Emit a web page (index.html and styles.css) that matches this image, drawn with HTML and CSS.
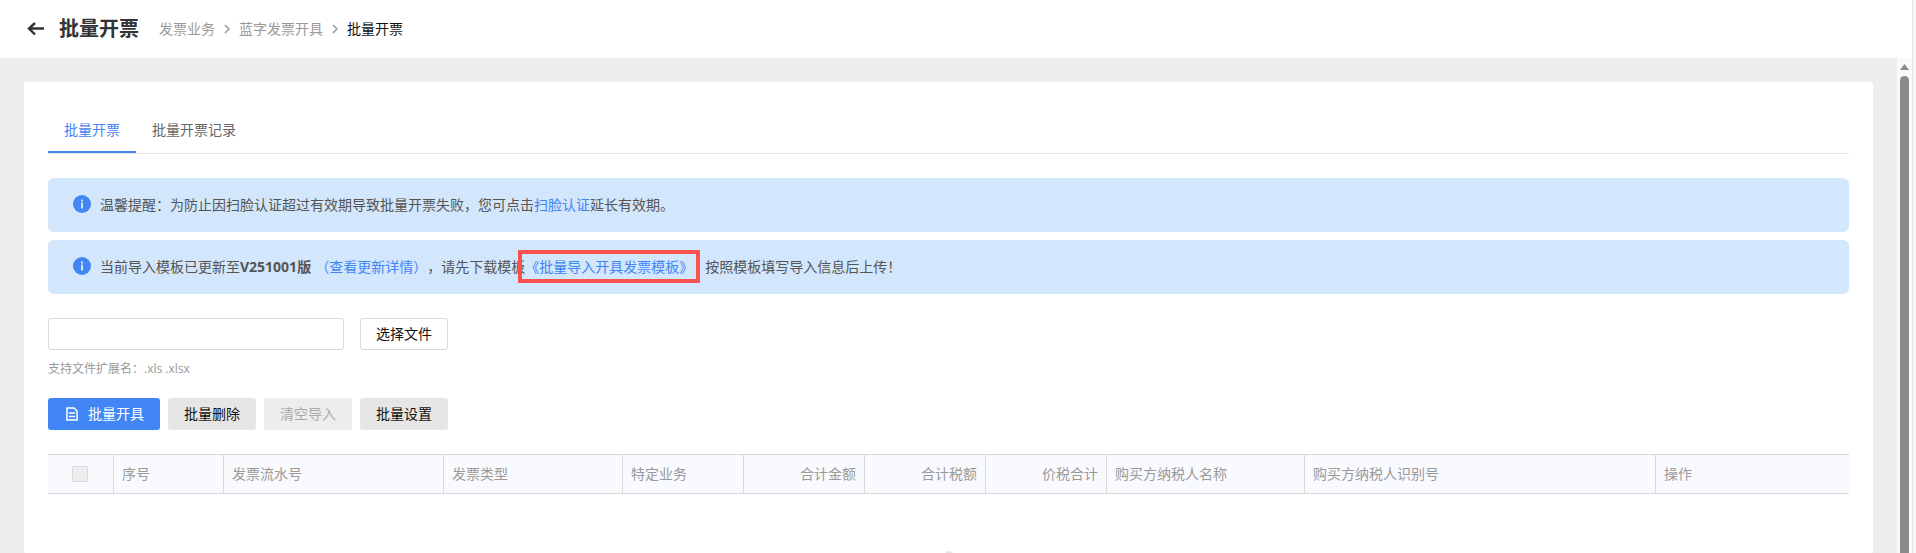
FILE: index.html
```html
<!DOCTYPE html>
<html lang="zh-CN">
<head>
<meta charset="utf-8">
<title>批量开票</title>
<link rel="stylesheet" href="styles.css">
</head>
<body>
<div class="app">
  <header class="header">
    <button class="back" type="button" aria-label="返回">
      <svg width="18" height="14" viewBox="0 0 18 14" fill="none" stroke="#333" stroke-width="2.400"><path d="M17 6.500H2M8 1L2 6.500l6 6"/></svg>
    </button>
    <h1 class="title">批量开票</h1>
    <nav class="crumbs" aria-label="面包屑">
      <a href="#">发票业务</a>
      <svg class="chevron" width="6" height="10" viewBox="0 0 6 10"><path d="M1 1l4 4-4 4"/></svg>
      <a href="#">蓝字发票开具</a>
      <svg class="chevron" width="6" height="10" viewBox="0 0 6 10"><path d="M1 1l4 4-4 4"/></svg>
      <span class="current">批量开票</span>
    </nav>
  </header>
  <div class="body">
    <main class="content">
      <section class="panel">
        <div class="tabs" role="tablist">
          <button class="tab tab-active" type="button" role="tab" aria-selected="true">批量开票</button>
          <button class="tab" type="button" role="tab" aria-selected="false">批量开票记录</button>
        </div>
        <div class="alerts">
          <div class="alert">
            <svg class="info" width="18" height="20" viewBox="0 0 18 20"><circle cx="9" cy="9" r="9" fill="#4285f4"/><path d="M8 4.500h2v2H8zM8 7.500h2v6H8z" fill="#d2e6fc"/></svg>
            <p class="alert-text">温馨提醒：为防止因扫脸认证超过有效期导致批量开票失败，您可点击<a href="#">扫脸认证</a>延长有效期。</p>
          </div>
          <div class="alert">
            <svg class="info" width="18" height="20" viewBox="0 0 18 20"><circle cx="9" cy="9" r="9" fill="#4285f4"/><path d="M8 4.500h2v2H8zM8 7.500h2v6H8z" fill="#d2e6fc"/></svg>
            <p class="alert-text">当前导入模板已更新至<b class="version">V251001版</b><a href="#">（查看更新详情）</a>，请先下载模板<a class="template" href="#">《批量导入开具发票模板》</a><span class="after">按照模板填写导入信息后上传！</span></p>
          </div>
        </div>
        <div class="upload">
          <input class="file-name" type="text" aria-label="文件名">
          <button class="btn btn-outline" type="button">选择文件</button>
        </div>
        <p class="hint">支持文件扩展名：.xls .xlsx</p>
        <div class="actions">
          <button class="btn btn-primary" type="button">
            <svg width="12" height="14" viewBox="0 0 12 14" fill="none" stroke="#fff" stroke-width="1.500"><path d="M1 1h7l3 3v9H1zM3 6h6M3 9.500h6"/></svg>
            批量开具
          </button>
          <button class="btn btn-grey" type="button">批量删除</button>
          <button class="btn btn-grey" type="button" disabled>清空导入</button>
          <button class="btn btn-grey" type="button">批量设置</button>
        </div>
        <table class="table">
          <colgroup>
            <col class="w66"><col class="w110"><col class="w220"><col class="w179"><col class="w121"><col class="w121"><col class="w121"><col class="w121"><col class="w198"><col><col class="w193">
          </colgroup>
          <thead>
            <tr>
              <th class="check"><input type="checkbox" aria-label="全选" disabled></th>
              <th>序号</th><th>发票流水号</th><th>发票类型</th><th>特定业务</th>
              <th class="num">合计金额</th><th class="num">合计税额</th><th class="num">价税合计</th>
              <th>购买方纳税人名称</th><th>购买方纳税人识别号</th><th>操作</th>
            </tr>
          </thead>
        </table>
        <svg class="empty" width="120" height="80" viewBox="0 0 120 80" fill="#e6e6e6" aria-hidden="true"><circle cx="60" cy="4" r="4"/><path d="M30 24h60v50H30z"/></svg>
      </section>
    </main>
    <div class="scrollbar" aria-hidden="true">
      <svg width="9" height="6" viewBox="0 0 9 6"><path d="M4.500 0L9 6H0z" fill="#8b8b8b"/></svg>
      <div class="thumb"></div>
    </div>
  </div>
</div>
</body>
</html>
```
FILE: styles.css
```css
* { box-sizing: border-box; }
body {
  margin: 0;
  background: #f8f8f8;
  color: #555;
  font: 14px/20px "Open Sans", "Noto Sans CJK SC", sans-serif;
  text-spacing-trim: space-all;
}
button, input { font: inherit; }
a { color: #4285f4; text-decoration: none; }
p, h1 { margin: 0; }

.app {
  display: flex;
  flex-direction: column;
  height: 100vh;
  margin-right: 3px;
  border-right: 1px solid #e2e2e2;
  background: #fff;
  overflow: hidden;
}
.header {
  display: flex;
  align-items: center;
  flex: none;
  height: 58px;
  padding: 0 27px;
}
.back { display: flex; padding: 0; border: 0; background: none; }
.title { margin-left: 14px; color: #333; font-size: 20px; line-height: 28px; font-weight: 700; }
.crumbs { display: flex; align-items: center; gap: 9px; margin-left: 20px; }
.crumbs a { color: #999; }
.crumbs .current { color: #111; }
.chevron { fill: none; stroke: #999; stroke-width: 1.5; }

.body { display: flex; flex: 1; min-height: 0; }
.content { flex: 1; min-width: 0; padding: 24px 24px 0; background: #ededed; }
.panel { height: 100%; padding: 24px; border-radius: 2px; background: #fff; overflow: hidden; }

.tabs { display: flex; height: 48px; border-bottom: 1px solid #e4e6e8; }
.tab { height: 47px; padding: 2px 16px 0; border: 0; border-bottom: 2px solid transparent; background: none; color: #666; }
.tab-active { border-color: #4285f4; color: #4285f4; }

.alerts { display: grid; gap: 8px; margin-top: 24px; }
.alert { display: flex; align-items: center; gap: 9px; height: 54px; padding: 0 25px; border-radius: 6px; background: #d2e6fc; }
.info { flex: none; }
.version { margin-right: 4px; }
.template { outline: 4px solid #fa5151; outline-offset: 3px; }
.after { margin-left: 12px; }

.upload { display: flex; gap: 16px; margin-top: 24px; }
.file-name { width: 296px; height: 32px; padding: 0 8px; border: 1px solid #d9d9d9; border-radius: 3px; }
.btn { display: flex; align-items: center; height: 32px; padding: 0 16px; border: 0; border-radius: 3px; color: #111; }
.btn-outline { padding: 0 15px; border: 1px solid #d9d9d9; background: #fff; }
.hint { margin-top: 9px; color: #999; font-size: 12px; }
.actions { display: flex; gap: 8px; margin-top: 19px; }
.btn-primary { gap: 10px; padding: 0 16px 0 18px; background: #4285f4; color: #fff; }
.btn-grey { background: #e6e6e6; }
.btn-grey:disabled { background: #ededed; color: #aaa; }

.table { width: 100%; margin-top: 24px; border-collapse: separate; border-spacing: 0; table-layout: fixed; }
.table th {
  height: 40px;
  padding: 0 8px;
  border: solid #d9d9d9;
  border-width: 1px 1px 1px 0;
  background: #f9fafe;
  color: #999;
  font-weight: 400;
  text-align: left;
}
.table th:last-child { border-right: 0; }
.table .num { text-align: right; }
.table .check { padding: 0 9px 0 8px; text-align: center; }
.check input { appearance: none; display: block; width: 16px; height: 16px; margin: 0 auto; border: 1px solid #d9d9d9; border-radius: 2px; background: #ededed; }
.w66 { width: 66px; }
.w110 { width: 110px; }
.w121 { width: 121px; }
.w179 { width: 179px; }
.w193 { width: 193px; }
.w198 { width: 198px; }
.w220 { width: 220px; }
.empty { display: block; margin: 57px auto 0; }

.scrollbar { display: flex; flex-direction: column; align-items: center; gap: 6px; flex: none; width: 15px; padding-top: 6px; background: #fafafa; }
.thumb { flex: 1; width: 9px; border-radius: 5px 5px 0 0; background: #8b8b8b; }
```
